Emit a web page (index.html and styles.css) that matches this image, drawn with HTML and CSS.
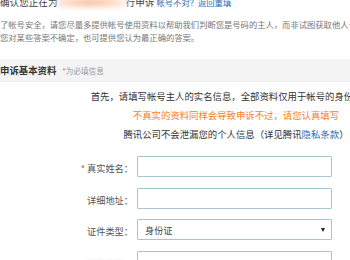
FILE: index.html
```html
<!DOCTYPE html>
<html lang="zh-CN">
<head>
    <meta charset="UTF-8">
    <title>申诉基本资料</title>
    <link rel="stylesheet" href="styles.css">
</head>
<body>
    <div class="page">
        <p class="confirm">确认您正在为<span class="masked"></span>行申诉 <a href="#">帐号不对？返回重填</a></p>
        <div class="notice">
            <p>了帐号安全，请您尽量多提供帐号使用资料以帮助我们判断您是号码的主人，而非试图获取他人号码</p>
            <p>您对某些答案不确定，也可提供您认为最正确的答案。</p>
        </div>

        <div class="section-head">
            <strong>申诉基本资料</strong>
            <span class="req"><i>*</i>为必填信息</span>
        </div>

        <div class="intro">
            <p>首先，请填写帐号主人的实名信息，全部资料仅用于帐号的身份验证。</p>
            <p class="warn">不真实的资料同样会导致申诉不过，请您认真填写</p>
            <p>腾讯公司不会泄漏您的个人信息（详见腾讯<a href="#">隐私条款</a>）</p>
        </div>

        <div class="form">
            <div class="form-row">
                <label><i>*</i> 真实姓名：</label>
                <input type="text">
            </div>
            <div class="form-row">
                <label>详细地址：</label>
                <input type="text">
            </div>
            <div class="form-row">
                <label>证件类型：</label>
                <div class="select">
                    <span>身份证</span>
                    <span class="arrow"></span>
                </div>
            </div>
            <div class="form-row">
                <label class="faded">证件号码：</label>
                <input type="text">
            </div>
        </div>
    </div>
</body>
</html>
```

FILE: styles.css
```css
/* General Styles */
html, body {
    margin: 0;
    padding: 0;
    overflow: hidden;
    background: #fff;
}

body {
    font-family: "Noto Sans CJK SC", "Liberation Sans", sans-serif;
    color: #333;
    width: 350px;
    height: 260px;
}

p {
    margin: 0;
}

a {
    color: #2b6db3;
    text-decoration: none;
}

.page {
    width: 350px;
}

/* top confirm line, cut at the top */
.confirm {
    margin-top: -4px;
    font-size: 9.6px;
    line-height: 13px;
    color: #444;
    white-space: nowrap;
}

.confirm a {
    font-size: 8.3px;
}

.masked {
    display: inline-block;
    width: 68px;
    height: 9px;
    vertical-align: -1px;
    background: linear-gradient(90deg, #fde6da, #f9c8aa 45%, #fcd7c0 75%, #fff0e8);
    filter: blur(2.5px);
}

.notice {
    margin-top: 9px;
    font-size: 8.3px;
    line-height: 13px;
    color: #777;
    white-space: nowrap;
}

/* section header bar */
.section-head {
    margin-top: 15px;
    height: 22px;
    display: flex;
    align-items: center;
    gap: 6px;
    background: #f4f4f4;
    border-bottom: 1px solid #ececec;
    white-space: nowrap;
}

.section-head strong {
    font-size: 9.4px;
    color: #333;
}

.section-head .req {
    font-size: 7.6px;
    color: #999;
}

.section-head i,
.form-row i {
    font-style: normal;
    color: #e8504a;
}

.intro {
    width: 472px;
    margin-top: 5px;
    text-align: center;
    font-size: 9.4px;
    line-height: 19px;
    color: #333;
    white-space: nowrap;
}

.intro .warn {
    color: #f7811f;
}

/* form rows */
.form {
    margin-top: 12px;
    display: flex;
    flex-direction: column;
    gap: 10.7px;
}

.form-row {
    display: flex;
    align-items: center;
    gap: 4px;
    height: 21px;
}

.form-row label {
    width: 133px;
    text-align: right;
    font-size: 9.2px;
    color: #555;
    white-space: nowrap;
    padding-top: 3px;
}

.form-row label.faded {
    color: #e4e4e4;
    filter: blur(1px);
}

.form-row input,
.select {
    box-sizing: border-box;
    width: 195px;
    height: 21px;
    margin: 0;
    border: 1px solid #a8c6d0;
    border-radius: 1px;
    background: #fff;
}

.select {
    display: flex;
    align-items: center;
    justify-content: space-between;
    padding: 0 6px 0 7px;
    font-size: 9.2px;
    color: #444;
}

.select .arrow {
    width: 0;
    height: 0;
    border-left: 2.5px solid transparent;
    border-right: 2.5px solid transparent;
    border-top: 4px solid #222;
}
```
